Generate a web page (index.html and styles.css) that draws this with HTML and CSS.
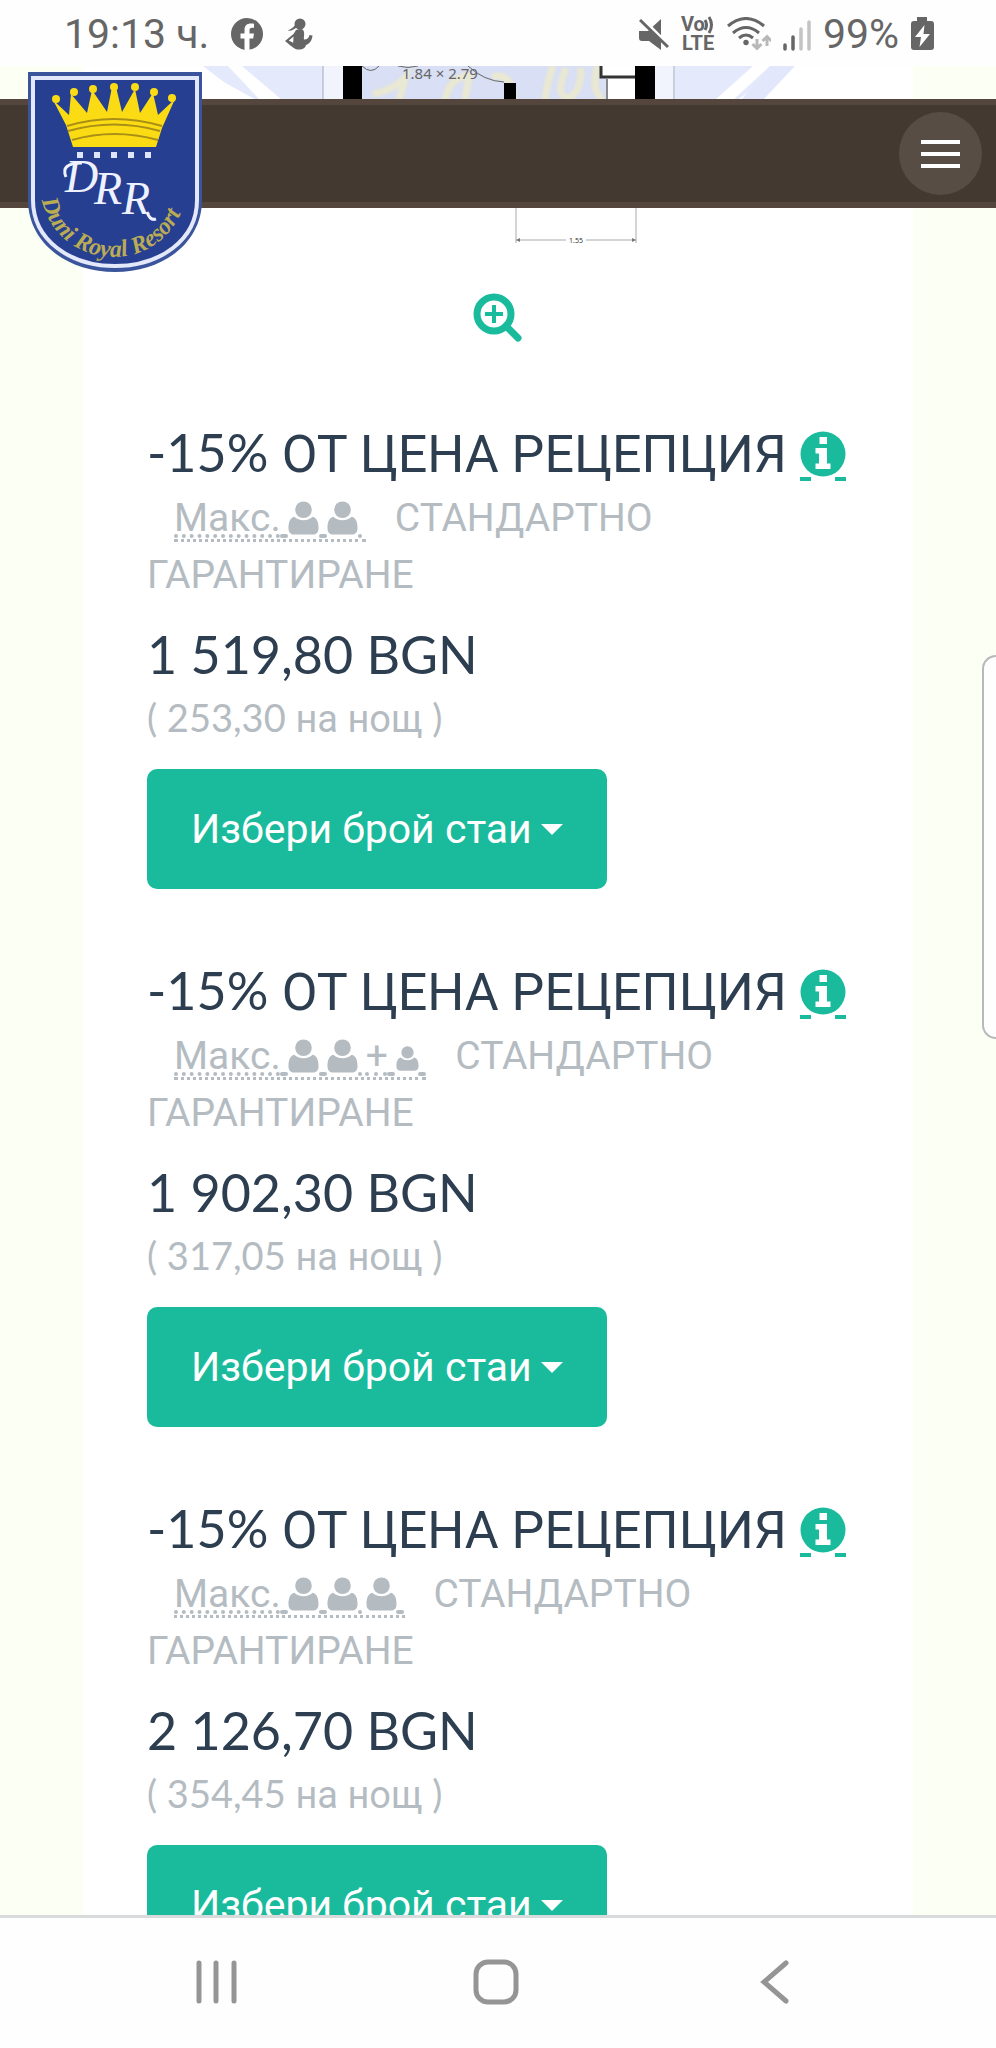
FILE: index.html
```html
<!DOCTYPE html>
<html lang="bg">
<head>
  <meta charset="UTF-8" />
  <meta name="viewport" content="width=device-width, initial-scale=1.0"/>
  <title>Duni Royal Resort</title>
  <link rel="stylesheet" href="styles.css">
</head>
<body>

  <svg class="sprite" aria-hidden="true">
    <symbol id="user" viewBox="0 0 32 35">
      <circle cx="16" cy="9" r="8.6"/>
      <path d="M6.500 16.200C9 18.500 12 19.800 16 19.800s7-1.300 9.500-3.600c4.500 1 6 6 6 11.800 0 4-2 6.500-5.500 6.500H6C2.500 34.500.5 32 .5 28c0-5.800 1.500-10.800 6-11.800z"/>
    </symbol>
    <symbol id="info" viewBox="0 0 46 46">
      <circle cx="23" cy="23" r="22.500"/>
      <path fill="#fff" d="M19.500 6h7.500v7h-7.500zM15.500 17H27v15.500h3.500V38h-15v-5.500H19v-10h-3.500z"/>
    </symbol>
  </svg>

  <div class="status">
    <div class="status-left">
      <span class="time">19:13 ч.</span>
      <svg width="32" height="32" viewBox="0 0 32 32" aria-hidden="true">
        <circle cx="16" cy="16" r="16" fill="#666"/>
        <path fill="#fff" d="M13.500 32V20.500H9.500v-5h4v-3.500c0-4.500 2.500-6.500 6.500-6.500 1.500 0 3 .2 3 .2v4h-2c-2 0-2.500 1-2.500 2.300v3.500H23l-.8 5h-3.700V32z"/>
      </svg>
      <svg class="person" width="28" height="32" viewBox="0 0 28 32" aria-hidden="true" fill="#666">
        <circle cx="15" cy="6" r="5.500"/>
        <path d="M12 4Q10 9 3 12.500q4 1 10-4zM11 12q7-3 8 2c.5 3-.5 5 0 7.500 2 0 4.500-.5 5.500-4.500l3 .5c-.5 5-3 8.500-6.500 9.500-1 3.500-3.500 4.500-7 4.500-4.500 0-5.500-2-8-3.500L0 23l8.500-7z"/>
        <path fill="#fff" d="M8.500 18.500 3.800 22.600l4.400 2.200z"/>
      </svg>
    </div>
    <div class="status-right">
      <svg width="30" height="33" viewBox="0 0 30 33" aria-hidden="true">
        <path fill="#666" d="M0 13h9L22 1v31L10 23H3c-2 0-3-1-3-3z"/>
        <path d="M0-2 32 30" stroke="#fff" stroke-width="4"/>
        <path d="M1 2l28 27" stroke="#666" stroke-width="3"/>
      </svg>
      <svg class="volte" width="34" height="36" viewBox="0 0 34 36" aria-hidden="true">
        <text x="0" y="15">Vo</text><text x="1" y="34">LTE</text>
        <path d="M24 4q3 5 0 10M28 1q5 8 0 16" fill="none" stroke="#666" stroke-width="3"/>
      </svg>
      <svg width="44" height="34" viewBox="0 0 44 34" aria-hidden="true" fill="none" stroke="#666" stroke-width="3">
        <path d="M1 9q18-15 36 0M6 16q13-11 26 0M12 21q7-6 14 0"/>
        <circle cx="19" cy="25.500" r="2.700" fill="#666" stroke="none"/>
        <path stroke="#b8b8b8" d="M30 22v9M25.500 27l4.500 4.500 4.500-4.500M40 29V20M35.500 24l4.500-4.500 4.500 4.500"/>
      </svg>
      <svg width="28" height="33" viewBox="0 0 28 33" aria-hidden="true" stroke-width="3.500" stroke-linecap="round">
        <path stroke="#666" d="M2 27v4M10 19v12"/>
        <path stroke="#c4c4c4" d="M18 11v20M26 4v27"/>
      </svg>
      <span class="time">99%</span>
      <svg width="23" height="34" viewBox="0 0 23 34" aria-hidden="true">
        <path fill="#666" d="M6 0h10v4h4q3 0 3 3v23q0 3-3 3H3q-3 0-3-3V7q0-3 3-3h3z"/>
        <path fill="#fff" d="M13.500 8 4 20h6L8.500 30 19 17h-6.500z"/>
      </svg>
    </div>
  </div>

  <div class="browser">
    <header class="topbar">
      <a href="#" class="logo" aria-label="Duni Royal Resort">
        <svg width="174" height="200" viewBox="0 0 174 200">
          <path d="M0 0H174V128C174 170 136 200 87 200S0 170 0 128z" fill="#3a559c"/>
          <path d="M5 6H169V128C169 168 132 194 87 194S5 168 5 128z" fill="#273f90" stroke="#e3e8fb" stroke-width="4"/>
          <g fill="#fbdc14">
            <path d="M25 28 41 43 43 22 59 41 64 18 79 40 84 15h4L94 40 107 17 112 41 125 21 130 43 147 27 134 56 128 75H45L38 53z"/>
            <circle cx="28" cy="27" r="4"/><circle cx="46" cy="20" r="4"/><circle cx="65" cy="17" r="4"/><circle cx="86" cy="15" r="4"/>
            <circle cx="107" cy="15" r="4"/><circle cx="126" cy="20" r="4"/><circle cx="144" cy="26" r="4"/>
          </g>
          <path d="M39 54Q86 40 134 54M40 59Q86 46 132 59M44 68Q86 56 130 68" fill="none" stroke="#a98f16" stroke-width="2"/>
          <path d="M49 80h6v6h-6zM66 80h6v6h-6zM83 80h6v6h-6zM100 80h6v6h-6zM117 80h6v6h-6z" fill="#dfe6fb"/>
          <g class="initials">
            <text x="37" y="120">D</text><text x="66" y="132">R</text><text x="94" y="142">R</text>
          </g>
          <path d="M119 140q3 9 9 7M38 105q-6-14 16-14" stroke="#eef1ff" stroke-width="3" fill="none"/>
          <path id="motto" d="M14 128C30 203 144 208 160 118" fill="none"/>
          <text class="motto"><textPath href="#motto">Duni Royal Resort</textPath></text>
        </svg>
      </a>
      <button class="menu" aria-label="Меню"><span></span><span></span><span></span></button>
    </header>

    <main class="rooms">
      <svg class="plan" viewBox="83 66 830 180" role="img" aria-label="План на стаята">
        <path fill="#e5e9fc" d="M195 66h585l-42 34H256z"/>
        <path fill="#fff" d="M195 66h8l44 34h-52zM228 66h14l40 34h-22zM753 66h17l-37 34h-18z"/>
        <path fill="#e3e7fb" d="M770 66h25l-32 34h-22z"/>
        <path fill="#d9dff4" d="M361 66h270v34H361z"/>
        <g class="watermark">
          <path d="M373 94q18-3 32-16l-6 22M445 100q5-24 24-24l-4 24M492 77q20-6 22 23M545 100q2-18 8-34M566 68q-12 30 3 30 12-6 12-30M598 66q-8 20 4 34"/>
        </g>
        <path fill="#f1f3fd" d="M323 66h20v34h-20zM655 66h20v34h-20z"/>
        <path stroke="#a5abba" d="M323 66v34M674 66v34"/>
        <path fill="#000" d="M343 66h19v34h-19zM635 66h20v34h-20zM504 83h12v17h-12z"/>
        <path fill="#fff" d="M601 66h34v34h-28V78h-6z"/>
        <path d="M601 66v11h34" fill="none" stroke="#333" stroke-width="3"/>
        <path d="M607 79v21" stroke="#888" stroke-width="2"/>
        <path d="M362 66q9 9 17 0M398 66q10 3 20 0M468 66q16 15 36 16" fill="none" stroke="#666"/>
        <text x="402" y="79" class="plan-size">1.84 × 2.79</text>
        <path d="M516 190v53M636 190v53M516 240h50M586 240h50" stroke="#aaa"/>
        <path d="M516 240l4-2v4zM636 240l-4-2v4z" fill="#777"/>
        <text x="569" y="243" class="plan-dim">1.55</text>
      </svg>

      <a href="#" class="zoom" aria-label="Увеличи">
        <svg width="50" height="50" viewBox="0 0 50 50" fill="none" stroke="#1abb9c">
          <circle cx="21" cy="21" r="17" stroke-width="7"/>
          <path d="M12 21h18M21 12v18" stroke-width="4"/>
          <path d="M33 33 45 45" stroke-width="7" stroke-linecap="round"/>
        </svg>
      </a>

      <section class="offer">
        <h3>-15% <span class="cyr">ОТ ЦЕНА РЕЦЕПЦИЯ</span> <a href="#" class="info" aria-label="Информация"><svg><use href="#info"/></svg></a></h3>
        <p class="terms"><abbr title="Максимален брой гости"><span class="cyr">Макс.</span> <svg class="user"><use href="#user"/></svg> <svg class="user"><use href="#user"/></svg>&nbsp;</abbr><span class="cyr">СТАНДАРТНО ГАРАНТИРАНЕ</span></p>
        <p class="price">1 519,80 BGN</p>
        <p class="night">( 253,30 <span class="cyr">на нощ</span> )</p>
        <button class="choose">Избери брой стаи<span class="caret"></span></button>
      </section>

      <section class="offer">
        <h3>-15% <span class="cyr">ОТ ЦЕНА РЕЦЕПЦИЯ</span> <a href="#" class="info" aria-label="Информация"><svg><use href="#info"/></svg></a></h3>
        <p class="terms"><abbr title="Максимален брой гости"><span class="cyr">Макс.</span> <svg class="user"><use href="#user"/></svg> <svg class="user"><use href="#user"/></svg> <span class="cyr">+</span> <svg class="user child"><use href="#user"/></svg>&nbsp;</abbr><span class="cyr">СТАНДАРТНО ГАРАНТИРАНЕ</span></p>
        <p class="price">1 902,30 BGN</p>
        <p class="night">( 317,05 <span class="cyr">на нощ</span> )</p>
        <button class="choose">Избери брой стаи<span class="caret"></span></button>
      </section>

      <section class="offer">
        <h3>-15% <span class="cyr">ОТ ЦЕНА РЕЦЕПЦИЯ</span> <a href="#" class="info" aria-label="Информация"><svg><use href="#info"/></svg></a></h3>
        <p class="terms"><abbr title="Максимален брой гости"><span class="cyr">Макс.</span> <svg class="user"><use href="#user"/></svg> <svg class="user"><use href="#user"/></svg> <svg class="user"><use href="#user"/></svg>&nbsp;</abbr><span class="cyr">СТАНДАРТНО ГАРАНТИРАНЕ</span></p>
        <p class="price">2 126,70 BGN</p>
        <p class="night">( 354,45 <span class="cyr">на нощ</span> )</p>
        <button class="choose">Избери брой стаи<span class="caret"></span></button>
      </section>
    </main>

    <div class="edge-panel"></div>
  </div>

  <nav class="navbar">
    <button aria-label="Последни">
      <svg width="46" height="46" viewBox="0 0 46 46"><path d="M5 4v38M22 4v38M40 4v38"/></svg>
    </button>
    <button aria-label="Начало">
      <svg width="46" height="46" viewBox="0 0 46 46"><rect x="3" y="3" width="40" height="40" rx="12"/></svg>
    </button>
    <button aria-label="Назад">
      <svg width="46" height="46" viewBox="0 0 46 46"><path d="M34 4 12 23l22 19"/></svg>
    </button>
  </nav>

</body>
</html>
```
FILE: styles.css
```css
* {
  box-sizing: border-box;
}

body {
  margin: 0;
  height: 100vh;
  display: flex;
  flex-direction: column;
  background: #fefefe;
  font-family: Lato, Roboto, sans-serif;
  color: #2c3e50;
}

h3, p {
  margin: 0;
}

button {
  border: none;
  cursor: pointer;
}

.sprite {
  display: none;
}

.cyr {
  font-family: Roboto, sans-serif;
  line-height: 1;
}

/* phone status bar */
.status {
  flex: none;
  height: 66px;
  padding: 2px 62px 0 64px;
  display: flex;
  align-items: center;
  justify-content: space-between;
  font-family: Roboto, sans-serif;
  color: #666;
}

.status-left {
  display: flex;
  align-items: center;
  gap: 22px;
}

.status-right {
  display: flex;
  align-items: center;
  gap: 12px;
}

.time {
  font-size: 41px;
  line-height: 48px;
}

.volte {
  overflow: visible;
  font: 700 20px Roboto, sans-serif;
  fill: #666;
}

/* page */
.browser {
  flex: 1;
  min-height: 0;
  position: relative;
  overflow: hidden;
  background: #fbfff4;
}

.topbar {
  position: absolute;
  top: 33px;
  left: 0;
  right: 0;
  height: 109px;
  padding: 0 14px 0 28px;
  display: flex;
  justify-content: space-between;
  align-items: center;
  background: #443931;
  border-top: 6px solid #54463c;
  border-bottom: 6px solid #54463c;
}

.logo {
  align-self: flex-start;
  margin-top: -33px;
}

.menu {
  width: 83px;
  height: 83px;
  padding: 0 22px;
  border-radius: 50%;
  background: #584d44;
  display: flex;
  flex-direction: column;
  justify-content: center;
  gap: 8px;
}

.menu span {
  height: 4px;
  background: #fff;
}

.rooms {
  margin: 0 83px;
  background: #fff;
}

.plan {
  display: block;
  width: 100%;
}

.plan-size {
  font: 15px "Noto Sans", sans-serif;
  fill: #666;
}

.plan-dim {
  font: 7px "Noto Sans", sans-serif;
  fill: #333;
}

.watermark {
  fill: none;
  stroke: #e9e8d2;
  stroke-width: 7px;
  filter: blur(1px);
}

.initials {
  font: italic 46px "Liberation Serif", serif;
  fill: #eef1ff;
}

.motto {
  font: italic 700 24px "Liberation Serif", serif;
  fill: #b9ac55;
}

.zoom {
  display: block;
  width: 50px;
  margin: 47px auto 78px;
}

.zoom svg {
  display: block;
}

.offer {
  padding: 0 63px 0 64px;
  margin-top: 70px;
}

.offer h3,
.price {
  font-size: 52px;
  font-weight: 400;
  line-height: 62px;
}

.offer h3 {
  margin-bottom: 5px;
}

.info {
  display: inline-block;
  height: 50px;
  line-height: 46px;
  vertical-align: -9px;
  background: linear-gradient(to right, #1abb9c 11px, transparent 11px, transparent 35px, #1abb9c 35px) bottom / 100% 4px no-repeat;
}

.info svg {
  display: block;
  width: 46px;
  height: 46px;
  fill: #1abb9c;
}

.terms,
.night {
  font-size: 38px;
  line-height: 57px;
  color: #b4bcc2;
}

.terms .cyr {
  font-size: 39px;
}

.terms abbr {
  margin: 0 29px 0 27px;
  font-size: 30px;
  line-height: 1;
  text-decoration: underline dotted 4px;
  text-underline-offset: 3px;
  border-bottom: 3px dotted #b4bcc2;
  padding-bottom: 2px;
}

.user {
  width: 31px;
  height: 34px;
  vertical-align: -4px;
  fill: #b4bcc2;
}

.user.child {
  width: 23px;
  height: 25px;
  vertical-align: -2px;
}

.price {
  margin: 21px 0 4px;
}

.choose {
  display: flex;
  align-items: center;
  gap: 9px;
  height: 120px;
  margin-top: 23px;
  padding: 0 44px;
  border-radius: 10px;
  background: #1abb9c;
  color: #fff;
  font: 41px Roboto, sans-serif;
}

.caret {
  border: 11px solid transparent;
  border-top-color: #fff;
  border-bottom: none;
}

.edge-panel {
  position: absolute;
  top: 589px;
  right: 0;
  width: 14px;
  height: 384px;
  background: #fefefe;
  border: 2px solid #b8b8b8;
  border-right: none;
  border-radius: 16px 0 0 16px;
}

/* phone navigation */
.navbar {
  flex: none;
  height: 133px;
  padding: 0 82px 0 77px;
  display: flex;
  justify-content: space-around;
  align-items: center;
  border-top: 3px solid #d9dadb;
}

.navbar button {
  width: 100px;
  padding: 0;
  background: none;
}

.navbar svg {
  fill: none;
  stroke: #959595;
  stroke-width: 5px;
  stroke-linecap: round;
}
```
